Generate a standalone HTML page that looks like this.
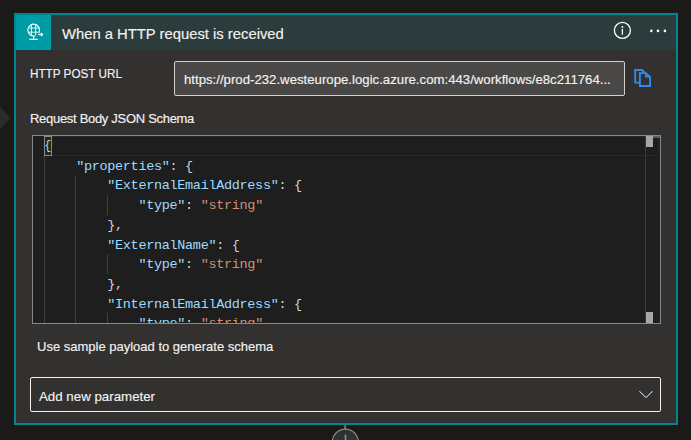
<!DOCTYPE html>
<html><head><meta charset="utf-8">
<style>
html,body{margin:0;padding:0}
body{width:691px;height:440px;overflow:hidden;background:#1b1a19;position:relative;font-family:"Liberation Sans",sans-serif;color:#fff}
.abs{position:absolute}
.t{position:absolute;white-space:nowrap;line-height:1;color:#f3f2f1;-webkit-text-stroke:0.15px #f3f2f1}
#card{left:14px;top:13px;width:660px;height:408px;border:2px solid #02858f;background:#323130}
#hdr{left:0;top:0;width:660px;height:35px;background:#2c3b3c}
#ico{left:0;top:0;width:35px;height:35px;background:#009ca6}
#url{left:174px;top:61px;width:449px;height:33px;border:1px solid #d2d0ce;border-radius:2px;background:#4a4847}
#ed{left:32px;top:135px;width:627px;height:187px;border:1px solid #8a8886;background:#1e1e1e;overflow:hidden}
#dd{left:30px;top:377px;width:629px;height:33px;border:1px solid #f3f2f1;border-radius:2px}
.code{position:absolute;font-family:"Liberation Mono",monospace;font-size:13.5px;letter-spacing:-0.32px;white-space:pre;line-height:19.7px;color:#d4d4d4}
.k{color:#9cdcfe}.s{color:#ce9178}
.g{position:absolute;width:1px;background:#404040}
</style></head><body>
<svg class="abs" style="left:0;top:0" width="20" height="440"><polygon points="0,107 10.5,118 0,129" fill="#2d2c2b"/></svg>

<div id="card" class="abs">
  <div id="hdr" class="abs">
    <div id="ico" class="abs"></div>
  </div>
</div>

<div class="t m" style="left:62px;top:27px;font-size:14.8px">When a HTTP request is received</div>

<div class="t m" style="left:30px;top:67px;font-size:13px;transform:scaleX(0.9);transform-origin:0 0">HTTP POST URL</div>
<div id="url" class="abs"></div>
<div class="t m" style="left:184px;top:73px;font-size:13.6px;transform:scaleX(0.971);transform-origin:0 0">https://prod-232.westeurope.logic.azure.com:443/workflows/e8c211764...</div>

<div class="t m" style="left:30px;top:112px;font-size:13px;letter-spacing:-0.3px">Request Body JSON Schema</div>


<div id="ed" class="abs">
  <div class="g" style="left:11px;top:20px;height:170px"></div>
  <div class="g" style="left:42px;top:40px;height:150px"></div>
  <div class="g" style="left:74px;top:59px;height:20px"></div>
  <div class="g" style="left:74px;top:118px;height:20px"></div>
  <div class="g" style="left:74px;top:177px;height:20px"></div>
  <div class="abs" style="left:11px;top:0;width:615px;height:20px;border:1px solid #282828;box-sizing:border-box"></div>
  <div class="abs" style="left:11px;top:0;width:8px;height:20px;background:#1a2a1f;border:1px solid #8a8a8a;box-sizing:border-box"></div>
  <div class="g" style="left:612px;top:0;height:187px;background:#3a3a3a"></div>
  <div class="abs" style="left:620px;top:0;width:7px;height:2px;background:#5e5e5e"></div>
  <div class="abs" style="left:613px;top:0;width:7px;height:11px;background:#a6a6a6"></div>
  <div class="abs" style="left:613px;top:176px;width:7px;height:11px;background:#a6a6a6"></div>
<div class="code" style="left:12px;top:1px"><span style="display:inline-block;transform:translate(-0.8px,-0.8px) scaleX(0.85);transform-origin:0 50%">{</span>
    <span class="k">"properties"</span>: {
        <span class="k">"ExternalEmailAddress"</span>: {
            <span class="k">"type"</span>: <span class="s">"string"</span>
        },
        <span class="k">"ExternalName"</span>: {
            <span class="k">"type"</span>: <span class="s">"string"</span>
        },
        <span class="k">"InternalEmailAddress"</span>: {
            <span class="k">"type"</span>: <span class="s">"string"</span>
        },
</div>
</div>

<div class="t m" style="left:37px;top:340px;font-size:13px">Use sample payload to generate schema</div>

<div id="dd" class="abs"></div>
<div class="t m" style="left:39px;top:390px;font-size:13.3px">Add new parameter</div>


<svg class="abs" style="left:16px;top:15px" width="35" height="35" viewBox="0 0 35 35">
  <g fill="none" stroke="#fff" stroke-width="1.1">
    <path d="M22.9,17.9 A5.9,5.9 0 1 0 19.2,20.8"/>
    <g stroke-width="0.85">
    <line x1="15.5" y1="9.7" x2="15.5" y2="20.5"/>
    <line x1="19.7" y1="9.7" x2="19.7" y2="20.4"/>
    <line x1="12.2" y1="13" x2="23" y2="13"/>
    <line x1="12.2" y1="17.2" x2="22.7" y2="17.2"/>
    </g>
    <line x1="17.6" y1="21" x2="17.6" y2="24"/>
    <line x1="13.3" y1="24.3" x2="21.8" y2="24.3"/>
    <line x1="22.2" y1="19.5" x2="26.5" y2="19.5"/>
    <path d="M25,18 L26.6,19.5 L25,21"/>
  </g>
</svg>
<svg class="abs" style="left:610px;top:18px" width="26" height="26" viewBox="0 0 26 26">
  <circle cx="12.4" cy="12.4" r="8" fill="none" stroke="#fff" stroke-width="1.3"/>
  <circle cx="12.4" cy="9" r="0.9" fill="#fff"/>
  <rect x="11.75" y="10.9" width="1.3" height="5.8" fill="#fff"/>
</svg>
<svg class="abs" style="left:640px;top:20px" width="34" height="22" viewBox="0 0 34 22">
  <circle cx="11.3" cy="10.9" r="1.3" fill="#fff"/>
  <circle cx="18.0" cy="10.9" r="1.3" fill="#fff"/>
  <circle cx="24.9" cy="10.9" r="1.3" fill="#fff"/>
</svg>
<svg class="abs" style="left:630px;top:65px" width="26" height="26" viewBox="0 0 26 26">
  <g fill="none" stroke="#2f8cf2" stroke-width="1.8" stroke-linejoin="miter">
    <path d="M9.9,17.7 H5.2 V5 H12.1 L15.2,8.1"/>
    <path d="M9.9,8.1 H16 L20.1,12.2 V21 H9.9 Z"/>
    <path d="M16,8.1 V11.6 H20.1"/>
  </g>
</svg>
<svg class="abs" style="left:630px;top:380px" width="30" height="26" viewBox="0 0 30 26">
  <path d="M9.5,11.2 L16,17.7 L22.5,11.2" fill="none" stroke="#fff" stroke-width="1"/>
</svg>
<svg class="abs" style="left:320px;top:424px" width="52" height="16" viewBox="0 0 52 16">
  <line x1="25.2" y1="1" x2="25.2" y2="5.5" stroke="#8a8886" stroke-width="1.5"/>
  <circle cx="25.3" cy="18.3" r="13.1" fill="#323130" stroke="#8a8886" stroke-width="1.2"/>
  <line x1="25.5" y1="10.5" x2="25.5" y2="16" stroke="#479ef5" stroke-width="1.6"/>
</svg>
</body></html>
